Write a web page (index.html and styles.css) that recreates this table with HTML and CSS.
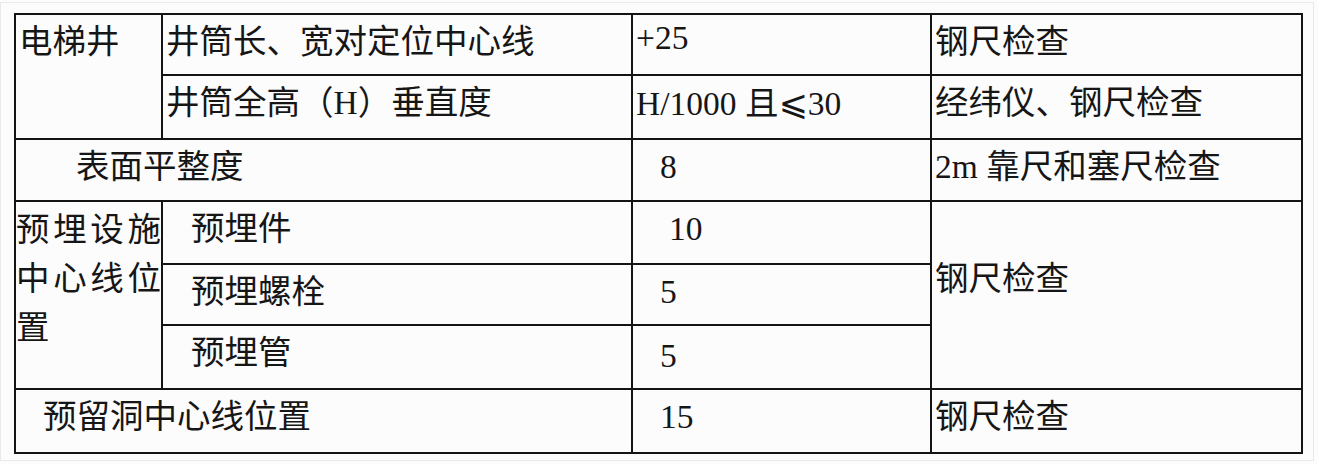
FILE: index.html
```html
<!DOCTYPE html>
<html lang="zh-CN">
<head>
<meta charset="utf-8">
<title>电梯井允许偏差</title>
<link rel="stylesheet" href="styles.css">
</head>
<body>
<div class="frame">
  <table class="spec">
    <colgroup><col class="c1"><col class="c2"><col class="c3"><col class="c4"></colgroup>
    <tbody>
      <tr class="r1">
        <td rowspan="2">电梯井</td>
        <td>井筒长、宽对定位中心线</td>
        <td class="num hi">+25</td>
        <td>钢尺检查</td>
      </tr>
      <tr class="r2">
        <td>井筒全高（H）垂直度</td>
        <td>H/1000 且<span class="le">⩽</span>30</td>
        <td>经纬仪、钢尺检查</td>
      </tr>
      <tr class="r3">
        <td colspan="2" class="ind-a">表面平整度</td>
        <td class="num ind-n">8</td>
        <td>2m 靠尺和塞尺检查</td>
      </tr>
      <tr class="r4">
        <td rowspan="3" class="group">
          <div class="jl">预埋设施</div>
          <div class="jl">中心线位</div>
          <div>置</div>
        </td>
        <td class="ind-b">预埋件</td>
        <td class="num ind-10">10</td>
        <td rowspan="3" class="merged">钢尺检查</td>
      </tr>
      <tr class="r5">
        <td class="ind-b">预埋螺栓</td>
        <td class="num ind-n">5</td>
      </tr>
      <tr class="r6">
        <td class="ind-b">预埋管</td>
        <td class="num ind-n low">5</td>
      </tr>
      <tr class="r7">
        <td colspan="2" class="ind-c">预留洞中心线位置</td>
        <td class="num ind-n">15</td>
        <td>钢尺检查</td>
      </tr>
    </tbody>
  </table>
</div>
</body>
</html>
```

FILE: styles.css
```css
html, body {
  margin: 0;
  padding: 0;
  background: #fcfcfd;
}

.frame {
  box-sizing: border-box;
  margin-top: 2px;
  width: 1314px;
  height: 459px;
  border: 1px solid #e8e9ec;
  padding: 10px 0 0 13px;
}

.spec {
  table-layout: fixed;
  width: 1289px;
  border-collapse: separate;
  border-spacing: 0;
  border-left: 2px solid #141414;
  border-top: 2px solid #141414;
  background: #fcfcfd;
}

.c1 { width: 147px; }
.c2 { width: 470px; }
.c3 { width: 299px; }
.c4 { width: 371px; }

.r1 { height: 61px; }
.r2 { height: 64px; }
.r3 { height: 62px; }
.r4 { height: 63px; }
.r5 { height: 61px; }
.r6 { height: 64px; }
.r7 { height: 64px; }

.spec td {
  border-right: 2px solid #141414;
  border-bottom: 2px solid #141414;
  vertical-align: top;
  padding: 7px 0 0 3px;
  font-family: "Liberation Serif", "Noto Sans CJK SC", "DejaVu Sans", serif;
  font-size: 33.5px;
  line-height: 40px;
  color: #161616;
  white-space: nowrap;
}

.spec td.num { padding-top: 7px; }
.spec td.hi { padding-top: 3px; }
.spec td.low { padding-top: 10px; }

.spec td.ind-a { padding-left: 60px; }
.spec td.ind-b { padding-left: 28px; }
.spec td.ind-c { padding-left: 27px; }
.spec td.ind-n { padding-left: 27px; }
.spec td.ind-10 { padding-left: 36px; }

.le {
  font-family: "DejaVu Sans", sans-serif;
  font-size: 35px;
}

.spec td.group {
  padding: 0;
  font-family: "Noto Sans CJK SC", sans-serif;
  line-height: 49px;
}

.jl {
  text-align: justify;
  text-align-last: justify;
}

.spec td.merged {
  padding-top: 57px;
}
```
